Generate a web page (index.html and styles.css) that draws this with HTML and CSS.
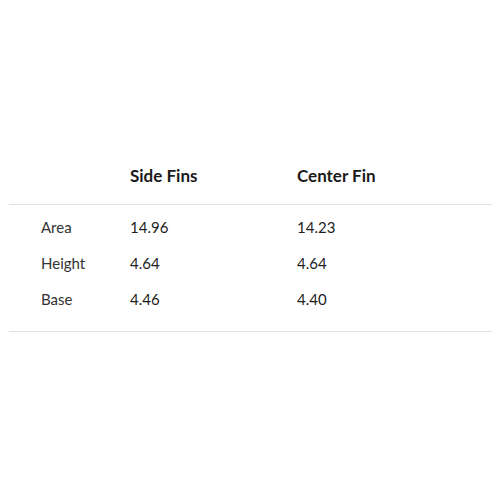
FILE: index.html
```html
<!DOCTYPE html>
<html>
<head>
<meta charset="utf-8">
<link rel="stylesheet" href="styles.css">
</head>
<body>
<div class="page">
  <div class="table">
    <div class="row head">
      <div class="cell"></div>
      <div class="cell">Side Fins</div>
      <div class="cell">Center Fin</div>
    </div>
    <div class="body">
      <div class="row">
        <div class="cell label">Area</div>
        <div class="cell">14.96</div>
        <div class="cell">14.23</div>
      </div>
      <div class="row">
        <div class="cell label">Height</div>
        <div class="cell">4.64</div>
        <div class="cell">4.64</div>
      </div>
      <div class="row">
        <div class="cell label">Base</div>
        <div class="cell">4.46</div>
        <div class="cell">4.40</div>
      </div>
    </div>
  </div>
</div>
</body>
</html>
```

FILE: styles.css
```css
html, body {
  margin: 0;
  padding: 0;
  background: #ffffff;
}
.page {
  padding: 165px 8px 0 9px;
  font-family: "Lato", "Open Sans", sans-serif;
  color: #222222;
}
.table {
  width: 483px;
}
.row {
  display: grid;
  grid-template-columns: 89px 167px 1fr;
  padding-left: 32px;
  height: 36px;
  align-items: center;
  font-size: 15px;
}
.row.head {
  height: 20px;
  padding-bottom: 19px;
  font-size: 17px;
  font-weight: 700;
  color: #1a1a1a;
  border-bottom: 1px solid #e2e2e2;
}
.body {
  padding: 4px 0 14px;
  border-bottom: 1px solid #e2e2e2;
}
.label {
  color: #333333;
}
```
